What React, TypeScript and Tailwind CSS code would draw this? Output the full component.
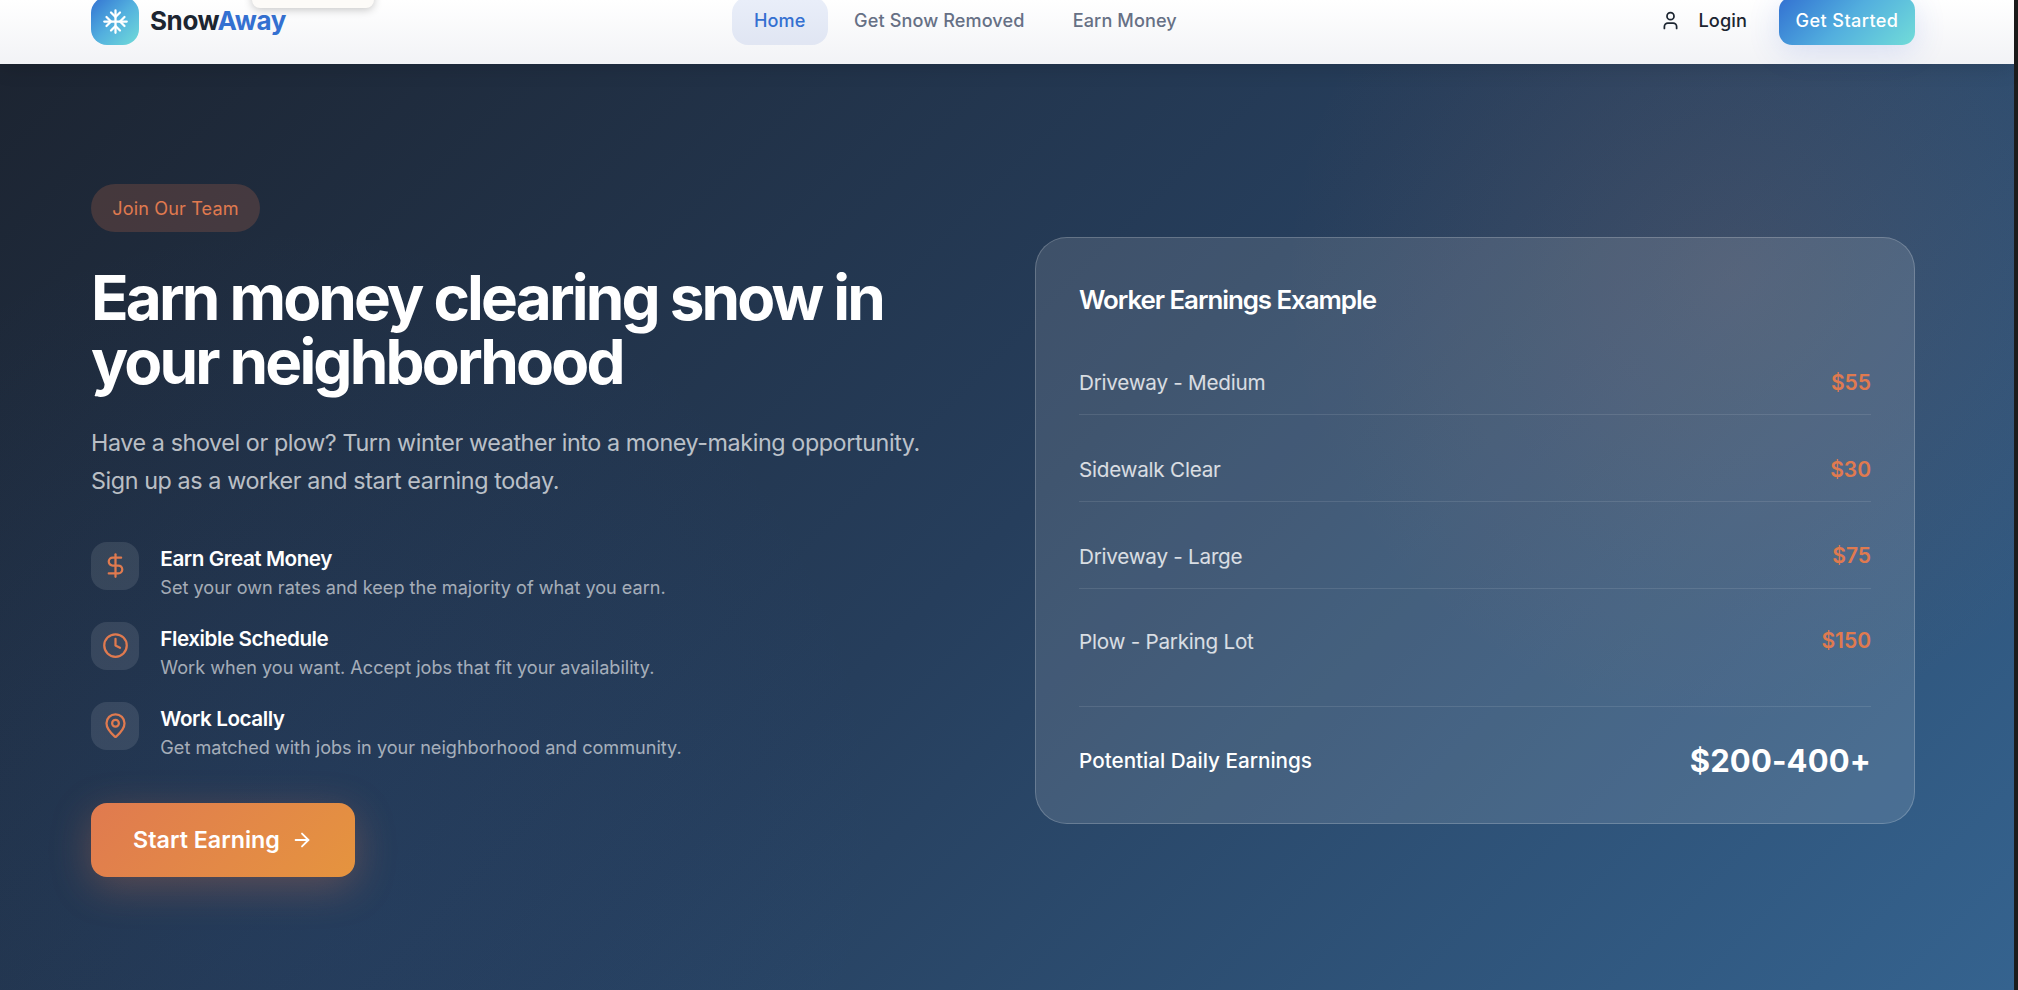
import { ArrowRight, Clock, DollarSign, MapPin, User } from 'lucide-react';

const navLinks = [
  { label: 'Home', active: true },
  { label: 'Get Snow Removed', active: false },
  { label: 'Earn Money', active: false },
];

const benefits = [
  {
    icon: DollarSign,
    title: 'Earn Great Money',
    text: 'Set your own rates and keep the majority of what you earn.',
  },
  {
    icon: Clock,
    title: 'Flexible Schedule',
    text: 'Work when you want. Accept jobs that fit your availability.',
  },
  {
    icon: MapPin,
    title: 'Work Locally',
    text: 'Get matched with jobs in your neighborhood and community.',
  },
];

const earnings = [
  { job: 'Driveway - Medium', pay: '$55' },
  { job: 'Sidewalk Clear', pay: '$30' },
  { job: 'Driveway - Large', pay: '$75' },
  { job: 'Plow - Parking Lot', pay: '$150' },
];

function Snowflake() {
  return (
    <svg
      className="w-[27px] h-[27px]"
      viewBox="0 0 24 24"
      fill="none"
      stroke="currentColor"
      strokeWidth="2"
      strokeLinecap="round"
      strokeLinejoin="round">
      <path d="M2 12h20M12 2v20" />
      <path d="m20 16-4-4 4-4M4 8l4 4-4 4M16 4l-4 4-4-4M8 20l4-4 4 4" />
    </svg>
  );
}

function Header() {
  return (
    <header className="relative h-16 shrink-0 bg-linear-to-b from-white to-[#f2f3f6] shadow-[0_4px_20px_rgba(0,0,0,0.12)]">
      {/* tooltip cut off by the top edge */}
      <div className="absolute left-[252px] -top-6 w-[122px] h-8 rounded-lg bg-[#fdfbf8] shadow-[0_2px_8px_rgba(0,0,0,0.22)] z-10" />

      <div className="h-full flex items-end pl-[91px] pr-[99px] pb-[19px]">
        <a href="#" className="flex items-center gap-[11px] w-[641px] shrink-0">
          <span className="w-12 h-12 rounded-2xl flex items-center justify-center text-white bg-linear-135 from-[#3470d1] via-[#53afde] to-[#72dcd8]">
            <Snowflake />
          </span>
          <span className="text-[26px] leading-8 font-bold tracking-[-0.4px] text-[#1c2531]">
            Snow<span className="text-[#3470d1]">Away</span>
          </span>
        </a>

        <nav className="flex items-center gap-[5px] shrink-0">
          {navLinks.map(({ label, active }) => (
            <a
              key={label}
              href="#"
              className={
                active
                  ? 'h-12 px-[22px] rounded-2xl flex items-center whitespace-nowrap text-[18.1px] tracking-[0.1px] font-medium text-[#3470d1] bg-[#3460c8]/11'
                  : 'h-12 px-[21.6px] rounded-2xl flex items-center whitespace-nowrap text-[18.1px] tracking-[0.1px] font-medium text-[#667085]'
              }>
              {label}
            </a>
          ))}
        </nav>

        <div className="flex-1 flex items-center justify-end">
          <a href="#" className="flex items-center gap-[17px] text-[18.2px] tracking-[0.1px] font-medium text-[#1c2531]">
            <User className="w-[21px] h-[21px]" />
            Login
          </a>
          <button className="ml-8 w-[136px] h-12 rounded-[13px] whitespace-nowrap text-[18.1px] tracking-[0.4px] font-medium text-white bg-linear-135 from-[#3470d1] via-[#53afde] to-[#72dcd8] shadow-[0_6px_32px_rgba(52,90,209,0.16)]">
            Get Started
          </button>
        </div>
      </div>
    </header>
  );
}

function Pitch() {
  return (
    <div>
      <span className="flex w-[169px] justify-center items-center h-12 pt-px rounded-full bg-[#e07a4f]/20 text-[#e07a4f] text-[18.1px] tracking-[0.12px]">
        Join Our Team
      </span>

      <h1 className="mt-[34px] whitespace-nowrap text-[62px] leading-[64px] font-bold tracking-[-2.84px] text-white">
        Earn money clearing snow in
        <br />
        your neighborhood
      </h1>

      <p className="mt-[30px] whitespace-nowrap text-[23.3px] leading-[38.4px] tracking-[-0.4px] text-white/70">
        Have a shovel or plow? Turn winter weather into a money-making opportunity.
        <br />
        Sign up as a worker and start earning today.
      </p>

      <ul className="mt-[41px] flex flex-col gap-[21.33px]">
        {benefits.map(({ icon: Icon, title, text }) => (
          <li key={title} className="flex items-start gap-[21.33px]">
            <span className="w-12 h-12 shrink-0 rounded-2xl bg-white/10 flex items-center justify-center">
              <Icon className="w-[27px] h-[27px] text-[#e07a4f]" />
            </span>
            <div>
              <h4 className="pt-px text-[20.7px] leading-[31px] font-semibold tracking-[-0.47px] text-white">{title}</h4>
              <p className="text-[18.1px] leading-[26.67px] text-white/60">{text}</p>
            </div>
          </li>
        ))}
      </ul>

      <button className="mt-[43px] w-[264px] h-[74px] rounded-2xl flex items-center justify-center gap-[11px] text-[23.3px] font-semibold text-white bg-linear-135 from-[#e07a4f] to-[#e5943e] shadow-[0_10px_40px_rgba(224,122,79,0.3)]">
        Start Earning
        <ArrowRight className="w-[22px] h-[22px]" />
      </button>
    </div>
  );
}

function EarningsCard() {
  return (
    <div className="h-[587px] rounded-[32px] border border-white/20 bg-white/12 px-[43px] pt-[43px]">
      <h3 className="pt-px text-[25.9px] leading-9 font-semibold tracking-[-1.05px] text-white">
        Worker Earnings Example
      </h3>

      <ul className="mt-8 flex flex-col gap-[21.67px]">
        {earnings.map(({ job, pay }) => (
          <li
            key={job}
            className="h-[65px] last:h-[61px] pt-px flex items-center justify-between border-b border-white/10 last:border-0">
            <span className="text-[20.7px] tracking-[-0.26px] text-white/80">{job}</span>
            <span className="text-[21px] font-semibold text-[#e07a4f]">{pay}</span>
          </li>
        ))}
      </ul>

      <div className="mt-[35px] pt-[33px] flex items-center justify-between border-t border-white/10 text-white">
        <span className="text-[20.7px] leading-[42px] font-medium">Potential Daily Earnings</span>
        <span className="text-[31px] leading-[42px] font-bold tracking-[0.15px]">$200-400+</span>
      </div>
    </div>
  );
}

export default function App() {
  return (
    <div className="h-[990px] overflow-hidden flex bg-[#1c1c1c] font-['Inter',sans-serif] antialiased">
      <div className="w-[2014px] flex flex-col">
        <Header />
        <section className="flex-1 pl-[91px] pr-[99px] pt-[120px] bg-[radial-gradient(circle_at_86%_23%,rgba(224,122,79,0.11),transparent_24%),radial-gradient(circle_at_14%_82%,rgba(52,112,209,0.08),transparent_32%),linear-gradient(135deg,#1c2431_0%,#263e5c_50%,#35638f_100%)]">
          <div className="grid grid-cols-2 gap-16 items-center">
            <Pitch />
            <EarningsCard />
          </div>
        </section>
      </div>
    </div>
  );
}
